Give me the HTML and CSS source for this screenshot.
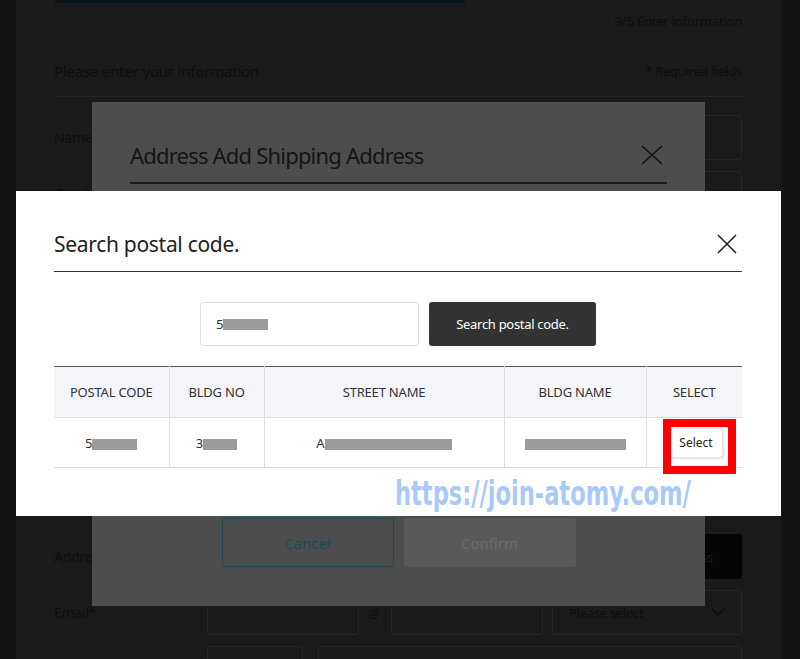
FILE: index.html
```html
<!DOCTYPE html>
<html lang="en">
<head>
  <meta charset="UTF-8" />
  <meta name="viewport" content="width=device-width, initial-scale=1" />
  <title>Enter information</title>
  <link rel="stylesheet" href="styles.css">
</head>
<body>
  <div class="page">
    <div class="step-bar"></div>
    <p class="step">3/5 Enter information</p>
    <div class="section-head">
      <h2>Please enter your information</h2>
      <span>* Required fields</span>
    </div>

    <div class="form-row">
      <label>Name*</label>
      <div class="field"><input type="text" class="box wide"></div>
    </div>
    <div class="form-row">
      <label>Gender*</label>
      <div class="field"><input type="text" class="box wide"></div>
    </div>
    <!-- rows hidden behind the modals -->
    <div class="form-row">
      <label></label>
      <div class="field"><input type="text" class="box wide"></div>
    </div>
    <div class="form-row">
      <label></label>
      <div class="field"><input type="text" class="box wide"></div>
    </div>
    <div class="form-row">
      <label></label>
      <div class="field"><input type="text" class="box wide"></div>
    </div>
    <div class="form-row">
      <label></label>
      <div class="field"><input type="text" class="box wide"></div>
    </div>
    <div class="form-row">
      <label></label>
      <div class="field"><input type="text" class="box wide"></div>
    </div>

    <div class="form-row address-row">
      <label>Address*</label>
      <div class="field">
        <input type="text" class="box wide">
        <button class="btn-black">Search address</button>
      </div>
    </div>
    <div class="form-row">
      <label>Email*</label>
      <div class="field">
        <input type="text" class="box mail">
        <span class="at">@</span>
        <input type="text" class="box mail">
        <div class="box select">
          <span>Please select</span>
          <svg width="14" height="9" viewBox="0 0 14 9"><path d="M1 1l6 6 6-6" fill="none" stroke="#0d0d0d" stroke-width="1.4"/></svg>
        </div>
      </div>
    </div>
    <div class="form-row">
      <label></label>
      <div class="field">
        <input type="text" class="box short">
        <input type="text" class="box wide">
      </div>
    </div>
  </div>

  <!-- address modal underneath -->
  <div class="modal-back">
    <div class="modal-head">
      <h3>Address Add Shipping Address</h3>
      <svg class="close" width="22" height="20" viewBox="0 0 22 20"><path d="M1 1l20 18M21 1L1 19" stroke="#141414" stroke-width="1.6" fill="none"/></svg>
    </div>
    <div class="modal-foot">
      <button class="btn-cancel">Cancel</button>
      <button class="btn-confirm">Confirm</button>
    </div>
  </div>

  <!-- postal code modal -->
  <div class="modal-front">
    <div class="front-head">
      <h3>Search postal code.</h3>
      <svg class="close" width="20" height="20" viewBox="0 0 20 20"><path d="M1 1l18 18M19 1L1 19" stroke="#222" stroke-width="1.6" fill="none"/></svg>
    </div>
    <div class="search-row">
      <div class="search-input">5<span class="blur b-code"></span></div>
      <button class="btn-search">Search postal code.</button>
    </div>
    <table class="result">
      <colgroup>
        <col class="c-code">
        <col class="c-no">
        <col class="c-street">
        <col class="c-name">
        <col class="c-select">
      </colgroup>
      <thead>
        <tr>
          <th>POSTAL CODE</th>
          <th>BLDG NO</th>
          <th>STREET NAME</th>
          <th>BLDG NAME</th>
          <th>SELECT</th>
        </tr>
      </thead>
      <tbody>
        <tr>
          <td>5<span class="blur b-code"></span></td>
          <td>3<span class="blur b-no"></span></td>
          <td>A<span class="blur b-street"></span></td>
          <td><span class="blur b-name"></span></td>
          <td><button class="btn-select">Select</button></td>
        </tr>
      </tbody>
    </table>
    <div class="mark"></div>
    <div class="watermark">https://join-atomy.com/</div>
  </div>
</body>
</html>
```

FILE: styles.css
```css
body {
  margin: 0;
  background-color: #131313;
  font-family: 'Noto Sans', 'Open Sans', sans-serif;
  overflow: hidden;
}
.page {
  width: 765px;
  height: 659px;
  margin-left: 16px;
  padding: 0 39px 0 38px;
  background-color: #1a1a1a;
  color: #0d0d0d;
  box-sizing: border-box;
  overflow: hidden;
}
.step-bar {
  width: 410px;
  height: 3px;
  margin-left: 1px;
  background-color: #07131a;
}
.step {
  margin: 8px 0 0 0;
  font-size: 13px;
  line-height: 20px;
  text-align: right;
  letter-spacing: -0.2px;
}
.section-head {
  display: flex;
  justify-content: space-between;
  align-items: center;
  margin-top: 29px;
  padding-bottom: 14px;
  border-bottom: 1px solid #262626;
}
.section-head h2 {
  margin: 0;
  font-size: 15px;
  line-height: 22px;
  font-weight: normal;
  letter-spacing: -0.2px;
}
.section-head span {
  font-size: 13px;
  letter-spacing: -0.3px;
}
.form-row {
  display: flex;
  align-items: center;
  margin-top: 11px;
  font-size: 14px;
}
.section-head + .form-row {
  margin-top: 18px;
}
.form-row label {
  width: 153px;
  flex-shrink: 0;
  letter-spacing: -0.3px;
}
.field {
  flex: 1;
  display: flex;
  align-items: center;
  gap: 9px;
}
.box {
  height: 45px;
  box-sizing: border-box;
  border: 1px solid #262626;
  border-radius: 3px;
  background-color: transparent;
  font-family: inherit;
}
.wide {
  flex: 1;
}
.mail {
  width: 152px;
}
.short {
  width: 96px;
  margin-right: 6px;
}
.at {
  width: 14px;
  font-size: 13px;
  color: #0d0d0d;
}
.select {
  flex: 1;
  display: flex;
  align-items: center;
  justify-content: space-between;
  padding: 0 16px;
  font-size: 13px;
  letter-spacing: -0.3px;
}
.address-row {
  margin-top: 38px;
}
.btn-black {
  width: 150px;
  height: 45px;
  border: none;
  border-radius: 3px;
  background-color: #050505;
  color: #1e1e1e;
  font-family: inherit;
  font-size: 13px;
}

/* address modal */
.modal-back {
  position: absolute;
  left: 92px;
  top: 102px;
  width: 613px;
  height: 504px;
  padding: 38px 38px 39px;
  box-sizing: border-box;
  background-color: #4d4d4d;
  display: flex;
  flex-direction: column;
}
.modal-head {
  display: flex;
  justify-content: space-between;
  align-items: center;
  padding-bottom: 12px;
  border-bottom: 2px solid #1c1c1c;
}
.modal-head h3 {
  margin: 0;
  font-size: 22px;
  line-height: 30px;
  font-weight: normal;
  color: #141414;
  letter-spacing: -0.8px;
}
.modal-head .close {
  margin-right: 4px;
}
.modal-foot {
  margin-top: auto;
  display: flex;
  justify-content: center;
  gap: 10px;
}
.modal-foot button {
  width: 172px;
  height: 49px;
  border-radius: 3px;
  font-family: inherit;
  font-size: 15px;
}
.btn-cancel {
  border: 1px solid #1c4757;
  background-color: transparent;
  color: #1c4a5c;
}
.btn-confirm {
  border: none;
  background-color: #595959;
  color: #6c6c6c;
}

/* postal code modal */
.modal-front {
  position: absolute;
  left: 16px;
  top: 191px;
  width: 765px;
  height: 325px;
  padding: 38px 39px 0 38px;
  box-sizing: border-box;
  background-color: #fff;
}
.front-head {
  display: flex;
  justify-content: space-between;
  align-items: center;
  padding-bottom: 12px;
  border-bottom: 1px solid #333;
}
.front-head h3 {
  margin: 0;
  font-size: 21px;
  line-height: 30px;
  font-weight: normal;
  color: #222;
  letter-spacing: -0.3px;
}
.front-head .close {
  margin-right: 5px;
}
.search-row {
  display: flex;
  justify-content: center;
  gap: 10px;
  margin-top: 30px;
}
.search-input {
  width: 219px;
  height: 44px;
  box-sizing: border-box;
  border: 1px solid #ddd;
  border-radius: 3px;
  padding-left: 15px;
  display: flex;
  align-items: center;
  font-size: 13px;
  color: #333;
}
.btn-search {
  width: 167px;
  height: 44px;
  border: none;
  border-radius: 3px;
  background-color: #333;
  color: #fff;
  font-family: inherit;
  font-size: 13px;
  letter-spacing: -0.3px;
}
.blur {
  display: inline-block;
  height: 11px;
  background-color: #9c9c9c;
  vertical-align: middle;
}
.b-code { width: 45px; }
.b-no { width: 34px; }
.b-street { width: 127px; }
.b-name { width: 101px; }
.result {
  width: 100%;
  margin-top: 20px;
  border-collapse: collapse;
  table-layout: fixed;
  border-top: 1px solid #555;
  font-size: 13px;
  color: #333;
}
.c-code { width: 115px; }
.c-no { width: 95px; }
.c-street { width: 240px; }
.c-name { width: 142px; }
.c-select { width: 96px; }
.result th,
.result td {
  height: 50px;
  padding: 0;
  text-align: center;
  border-bottom: 1px solid #ddd;
  border-right: 1px solid #ddd;
}
.result th:last-child,
.result td:last-child {
  border-right: none;
}
.result th {
  font-weight: normal;
  background-color: #f4f5f9;
  letter-spacing: -0.2px;
}
.result td {
  height: 49px;
}
.btn-select {
  display: block;
  width: 53px;
  height: 30px;
  margin: 0 0 0 23px;
  border: 1px solid #e2e2e2;
  border-radius: 3px;
  background-color: #fff;
  box-shadow: 1px 1px 2px rgba(0, 0, 0, 0.12);
  font-family: inherit;
  font-size: 12px;
  color: #222;
  padding: 0;
}
.mark {
  position: absolute;
  left: 647px;
  top: 228px;
  width: 73px;
  height: 55px;
  box-sizing: border-box;
  border: 8px solid #f00;
}
.watermark {
  position: absolute;
  left: 379px;
  top: 285px;
  font-family: 'DejaVu Sans Condensed', 'DejaVu Sans', sans-serif;
  font-weight: bold;
  font-size: 33px;
  line-height: 36px;
  color: #a9c9f9;
  white-space: nowrap;
  transform: scaleX(0.76);
  transform-origin: left top;
}
```
